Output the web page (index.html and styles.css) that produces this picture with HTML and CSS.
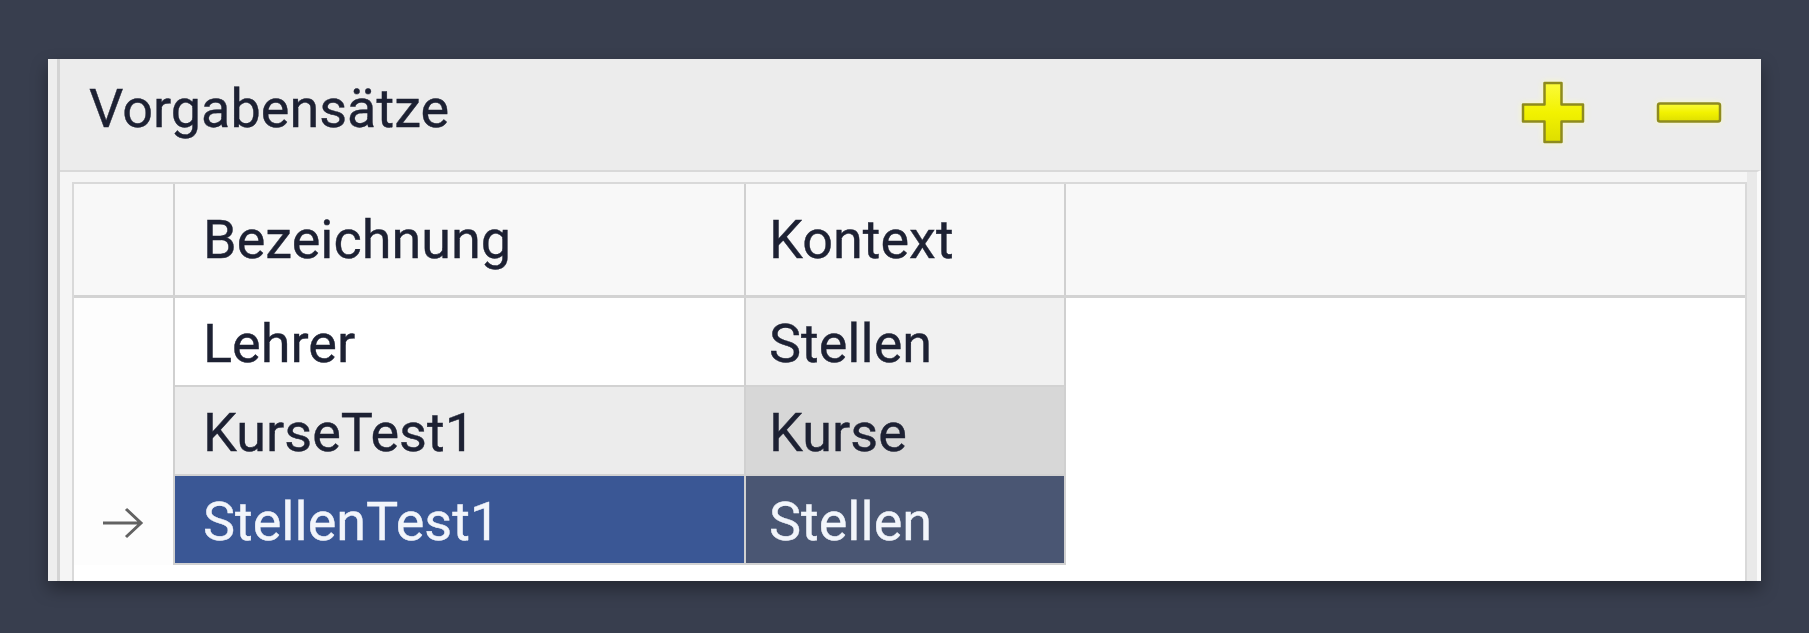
FILE: index.html
```html
<!DOCTYPE html>
<html lang="de">
<head>
	<meta charset="UTF-8">
	<title>Vorgabensätze</title>
	<link rel="stylesheet" href="styles.css">
</head>
<body>
	<div class="panel">
		<div class="frame">
			<div class="head">
				<span class="title">Vorgabensätze</span>
				<div class="tools">
					<a href="javascript:;" class="tool add">
						<svg width="66" height="66" viewBox="0 0 66 66">
							<defs>
								<linearGradient id="yel" x1="0" y1="0" x2="0" y2="1">
									<stop offset="0" stop-color="#fbfb3a"/>
									<stop offset="0.5" stop-color="#f2f200"/>
									<stop offset="1" stop-color="#dede00"/>
								</linearGradient>
							</defs>
							<path d="M24.5 3H41.5V24.5H63V41.5H41.5V62H24.5V41.5H3V24.5H24.5Z" fill="url(#yel)" stroke="#8e8b1e" stroke-width="2.5" stroke-linejoin="round"/>
						</svg>
					</a>
					<a href="javascript:;" class="tool remove">
						<svg width="68" height="26" viewBox="0 0 68 26">
							<rect x="3" y="3.5" width="62" height="18" rx="2" fill="url(#yel)" stroke="#8e8b1e" stroke-width="2.5"/>
						</svg>
					</a>
				</div>
			</div>
			<div class="body">
				<div class="grid">
					<div class="row head-row">
						<div class="cell sel"></div>
						<div class="cell c1">Bezeichnung</div>
						<div class="cell c2">Kontext</div>
					</div>
					<div class="row">
						<div class="cell sel"></div>
						<div class="cell c1">Lehrer</div>
						<div class="cell c2">Stellen</div>
					</div>
					<div class="row alt">
						<div class="cell sel"></div>
						<div class="cell c1">KurseTest1</div>
						<div class="cell c2">Kurse</div>
					</div>
					<div class="row current">
						<div class="cell sel">
							<svg class="arrow" width="42" height="34" viewBox="0 0 42 34">
								<path d="M1 17H39M24 3L39 17L24 31" fill="none" stroke="#626262" stroke-width="3"/>
							</svg>
						</div>
						<div class="cell c1">StellenTest1</div>
						<div class="cell c2">Stellen</div>
					</div>
				</div>
			</div>
		</div>
	</div>
</body>
</html>
```

FILE: styles.css
```css
html,body{margin:0;padding:0;}
body{background:#383e4e;padding:59px 0 0 48px;height:633px;box-sizing:border-box;overflow:hidden;font-family:Roboto,"Noto Sans",sans-serif;color:#1d2133;-webkit-text-stroke:0.4px currentColor;}
.panel{width:1713px;height:522px;background:#eeeeee;padding-left:9px;box-sizing:border-box;display:flex;box-shadow:0 8px 16px rgba(0,0,0,0.35);}
.frame{flex:1;display:flex;flex-direction:column;border-left:3px solid #d4d4d4;}
.head{height:111px;box-sizing:border-box;padding:18px 38px 0 29px;background:#ececec;display:flex;align-items:flex-start;}
.title{font-size:54px;line-height:63px;flex:1;}
.tools{display:flex;align-items:center;gap:69px;height:66px;margin-top:3px;}
.tool{display:block;line-height:0;}
.tool svg{display:block;filter:drop-shadow(0 0 3px rgba(255,255,180,0.8));}
.body{flex:1;border-top:2px solid #d9d9d9;padding:10px 10px 0 12px;border-right:4px solid #fafafa;background:#f5f5f5;background-image:linear-gradient(to left,#e9e9e9 10px,transparent 10px);background-clip:padding-box;overflow:hidden;}
.grid{height:100%;background:#fff;border:2px solid #d9d9d9;border-bottom:0;box-sizing:border-box;}
.row{display:flex;}
.cell{box-sizing:border-box;height:89px;display:flex;align-items:center;font-size:54px;padding-top:3px;white-space:nowrap;}
.sel{width:101px;border-right:2px solid #d0d0d0;background:#fdfdfd;padding-left:28px;}
.c1{width:571px;padding-left:28px;border-right:2px solid #d0d0d0;border-bottom:2px solid #d2d2d2;background:#fff;}
.c2{width:320px;padding-left:23px;border-right:2px solid #d0d0d0;border-bottom:2px solid #d2d2d2;background:#f1f1f1;}
.head-row{background:#f8f8f8;border-bottom:3px solid #d3d3d3;}
.head-row .cell{height:111px;background:#f8f8f8;border-bottom:0;padding-top:0;}
.alt .c1{background:#ececec;}
.alt .c2{background:#d7d7d7;}
.current .c1{background:#3a5795;color:#f2f5fb;}
.current .c2{background:#4a5673;color:#f2f5fb;}
.arrow{display:block;margin-top:2px;}
```
